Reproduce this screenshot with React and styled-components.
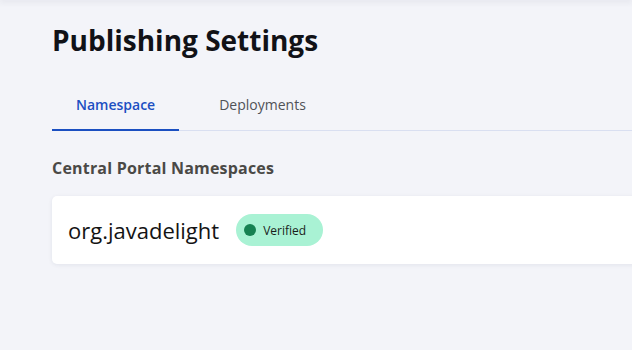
import React, { useState } from 'react'
import styled, { createGlobalStyle } from 'styled-components'

const GlobalStyle = createGlobalStyle`
  html, body {
    margin: 0;
    padding: 0;
    background: #f3f4f9;
    overflow: hidden;
  }

  body {
    font-family: "Open Sans", "Noto Sans", "Liberation Sans", sans-serif;
    color: #151515;
  }
`

const StyledTopBar = styled.div`
  height: 0;
  box-shadow: 0 0 6px 1px rgba(40, 45, 70, 0.18);
`

// the page is wider than the window, the card and tab line run off the right edge
const StyledWrapper = styled.main`
  width: 760px;
  padding: 21px 0 40px 52px;
  box-sizing: border-box;
`

const StyledTitle = styled.h1`
  margin: 0;
  font-size: 28px;
  line-height: 38px;
  font-weight: 700;
  color: #111217;
`

const StyledTabList = styled.div`
  display: flex;
  gap: 16px;
  margin-top: 22px;
  border-bottom: 1px solid #d9dff1;
`

const StyledTab = styled.button`
  padding: 14px 24px;
  margin-bottom: -1px;
  border: none;
  border-bottom: 2px solid ${({ active }) => (active ? '#1a4fc1' : 'transparent')};
  background: none;
  font-family: inherit;
  font-size: 14px;
  line-height: 20px;
  font-weight: ${({ active }) => (active ? 600 : 500)};
  color: ${({ active }) => (active ? '#1c4fc2' : '#505257')};
  cursor: pointer;
`

const StyledSectionHeading = styled.h2`
  margin: 26px 0 17px 0;
  font-size: 16px;
  line-height: 22px;
  font-weight: 700;
  letter-spacing: 0.2px;
  color: #4a4946;
`

const StyledCard = styled.div`
  display: flex;
  align-items: center;
  gap: 16px;
  height: 68px;
  padding: 0 16px;
  background: #ffffff;
  border-radius: 5px;
  box-shadow: 0 1px 4px rgba(30, 40, 80, 0.08);
`

const StyledName = styled.span`
  font-size: 22px;
  line-height: 30px;
  color: #141414;
`

const StyledBadge = styled.span`
  display: inline-flex;
  align-items: center;
  gap: 7px;
  height: 32px;
  margin-left: 1px;
  padding: 0 17px 0 8px;
  box-sizing: border-box;
  border-radius: 16px;
  background: #a9f2d4;
  font-size: 12px;
  font-weight: 500;
  color: #1a1d1b;
`

const StyledDot = styled.span`
  width: 12px;
  height: 12px;
  border-radius: 50%;
  background: #168152;
`

const tabs = ['Namespace', 'Deployments']

const App = () => {
  const [activeTab, setActiveTab] = useState('Namespace')

  return (
    <>
      <GlobalStyle />
      <StyledTopBar />
      <StyledWrapper>
        <StyledTitle>Publishing Settings</StyledTitle>
        <StyledTabList>
          {tabs.map(tab => (
            <StyledTab key={tab} active={tab === activeTab} onClick={() => setActiveTab(tab)}>
              {tab}
            </StyledTab>
          ))}
        </StyledTabList>
        <StyledSectionHeading>Central Portal Namespaces</StyledSectionHeading>
        <StyledCard>
          <StyledName>org.javadelight</StyledName>
          <StyledBadge>
            <StyledDot />
            Verified
          </StyledBadge>
        </StyledCard>
      </StyledWrapper>
    </>
  )
}

export default App
